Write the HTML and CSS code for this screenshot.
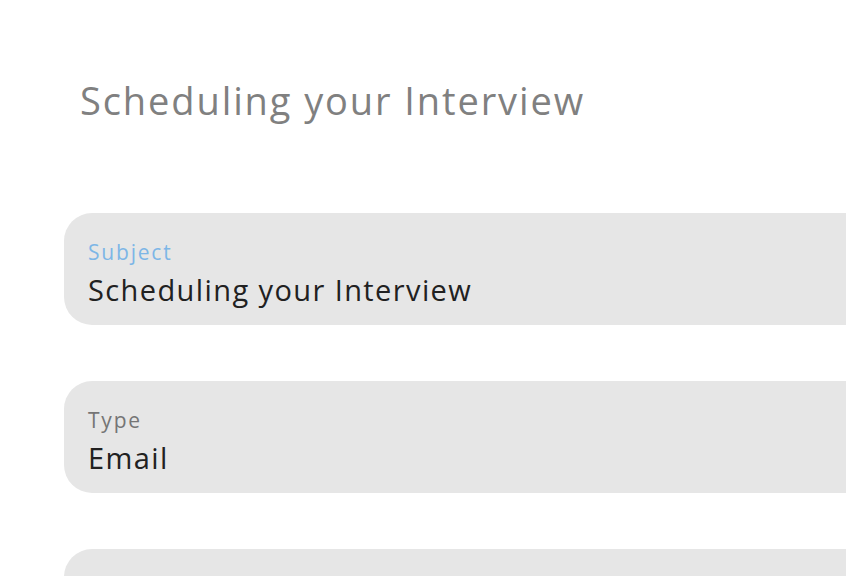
FILE: index.html
```html
<!DOCTYPE html>
<html>
<head>
<meta charset="utf-8">
<link rel="stylesheet" href="styles.css">
</head>
<body>
<div class="page">
  <h1 class="title">Scheduling your Interview</h1>
  <div class="fields">
    <div class="field">
      <div class="label label-active">Subject</div>
      <div class="value">Scheduling your Interview</div>
    </div>
    <div class="field">
      <div class="label">Type</div>
      <div class="value">Email</div>
    </div>
    <div class="field">
      <div class="label">&nbsp;</div>
      <div class="value">&nbsp;</div>
    </div>
  </div>
</div>
</body>
</html>
```
FILE: styles.css
```css
html, body {
  margin: 0;
  padding: 0;
  background: #ffffff;
  overflow: hidden;
}
.page {
  width: 846px;
  height: 576px;
  overflow: hidden;
  padding-left: 64px;
  box-sizing: border-box;
  font-family: "Open Sans", "Liberation Sans", sans-serif;
}
.title {
  margin: 0;
  padding: 74px 0 0 16px;
  font-size: 38px;
  font-weight: 400;
  line-height: 52px;
  color: #808080;
  letter-spacing: 1.9px;
}
.fields {
  display: flex;
  flex-direction: column;
  gap: 56px;
  margin-top: 87px;
}
.field {
  width: 900px;
  height: 112px;
  box-sizing: border-box;
  background: #e6e6e6;
  border-radius: 28px 0 0 28px;
  padding: 24px 0 0 24px;
  display: flex;
  flex-direction: column;
}
.label {
  font-size: 21px;
  line-height: 30px;
  color: #757575;
  letter-spacing: 1.8px;
}
.label-active {
  color: #7db6e6;
}
.value {
  font-size: 29px;
  line-height: 40px;
  margin-top: 3px;
  color: #212121;
  letter-spacing: 1.4px;
}
```
